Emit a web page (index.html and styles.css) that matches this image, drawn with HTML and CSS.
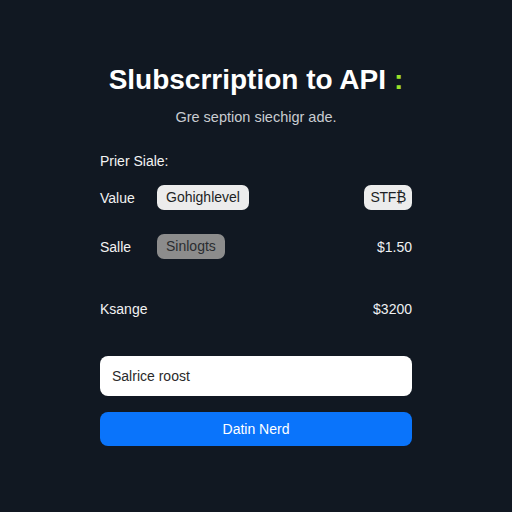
FILE: index.html
```html
<!DOCTYPE html>
<html lang="en">
<head>
    <meta charset="UTF-8">
    <meta name="viewport" content="width=device-width, initial-scale=1.0">
    <title>Subscription to API</title>
    <link rel="stylesheet" href="styles.css">
</head>
<body>

    <div class="container">
        <h1>Slubscrription to API<span class="accent">:</span></h1>
        <p class="subtitle">Gre seption siechigr ade.</p>

        <h3 class="section-label">Prier Siale:</h3>

        <div class="price-row">
            <span class="row-label">Value</span>
            <span class="pill pill-light">Gohighlevel</span>
            <span class="pill pill-light pill-end">STF₿</span>
        </div>

        <div class="price-row">
            <span class="row-label">Salle</span>
            <span class="pill pill-muted">Sinlogts</span>
            <span class="amount">$1.50</span>
        </div>

        <div class="price-row total-row">
            <span class="row-label">Ksange</span>
            <span class="amount">$3200</span>
        </div>

        <form class="order-form">
            <input type="text" value="Salrice roost">
            <button type="submit">Datin Nerd</button>
        </form>
    </div>

</body>
</html>
```

FILE: styles.css
```css
body {
    font-family: "Liberation Sans", Arial, sans-serif;
    background-color: #111822;
    color: #f2f2f2;
    margin: 0;
    padding: 0;
}
.container {
    width: 312px;
    margin: 0 auto;
    padding-top: 63px;
}
h1 {
    text-align: center;
    font-size: 28px;
    font-weight: 700;
    margin: 0;
    line-height: 34px;
    color: #ffffff;
}
h1 .accent {
    color: #9be12a;
    margin-left: 8px;
}
.subtitle {
    text-align: center;
    font-size: 14.5px;
    color: #c9ccd1;
    margin: 12px 0 0;
}
.section-label {
    font-size: 14px;
    font-weight: 400;
    margin: 28px 0 0;
    color: #f4f4f4;
}
.price-row {
    display: flex;
    align-items: center;
    height: 25px;
    margin-top: 16px;
    font-size: 14px;
}
.price-row + .price-row {
    margin-top: 24px;
}
.price-row.total-row {
    margin-top: 37px;
}
.row-label {
    width: 57px;
}
.pill {
    padding: 0 9px;
    height: 25px;
    line-height: 25px;
    border-radius: 7px;
    font-size: 14px;
    color: #1c1f24;
}
.pill-light {
    background-color: #ececec;
}
.pill-muted {
    background-color: #8c8c8c;
    color: #2a2c30;
}
.pill-end {
    padding: 0 6px;
    letter-spacing: -0.3px;
}
.pill-end,
.amount {
    margin-left: auto;
}
.amount {
    color: #eef0f2;
}
.order-form {
    margin-top: 35px;
}
.order-form input {
    box-sizing: border-box;
    width: 100%;
    height: 40px;
    padding: 0 12px;
    border: none;
    border-radius: 8px;
    background-color: #ffffff;
    font-family: inherit;
    font-size: 14px;
    color: #2a2a2a;
}
.order-form button {
    display: block;
    width: 100%;
    height: 34px;
    margin-top: 16px;
    border: none;
    border-radius: 8px;
    background-color: #0a74fb;
    color: white;
    font-family: inherit;
    font-size: 14px;
    cursor: pointer;
}
```
